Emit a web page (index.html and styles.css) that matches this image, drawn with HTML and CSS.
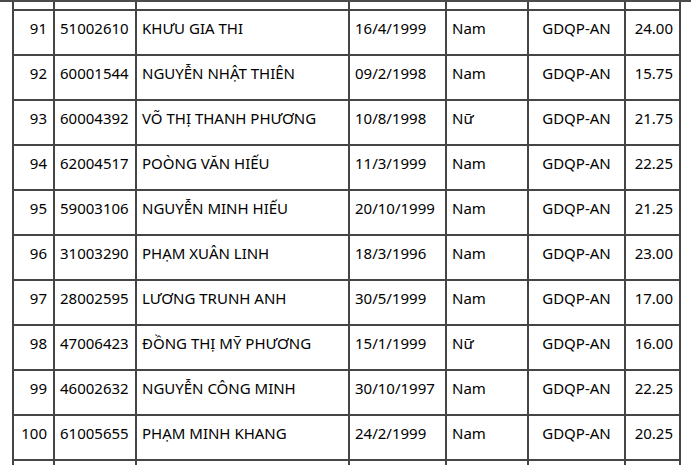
FILE: index.html
```html
<!DOCTYPE html>
<html lang="vi">
<head>
<meta charset="utf-8">
<title>Danh sách</title>
<link rel="stylesheet" href="styles.css">
</head>
<body>
<div class="topbar"></div>
<div class="sheet">
  <div class="row stub"><div class="c"></div><div class="c"></div><div class="c"></div><div class="c"></div><div class="c"></div><div class="c"></div><div class="c"></div></div>
  <div class="row"><div class="c num">91</div><div class="c">51002610</div><div class="c">KHƯU GIA THI</div><div class="c">16/4/1999</div><div class="c">Nam</div><div class="c mid">GDQP-AN</div><div class="c num">24.00</div></div>
  <div class="row"><div class="c num">92</div><div class="c">60001544</div><div class="c">NGUYỄN NHẬT THIÊN</div><div class="c">09/2/1998</div><div class="c">Nam</div><div class="c mid">GDQP-AN</div><div class="c num">15.75</div></div>
  <div class="row"><div class="c num">93</div><div class="c">60004392</div><div class="c">VÕ THỊ THANH PHƯƠNG</div><div class="c">10/8/1998</div><div class="c">Nữ</div><div class="c mid">GDQP-AN</div><div class="c num">21.75</div></div>
  <div class="row"><div class="c num">94</div><div class="c">62004517</div><div class="c">POÒNG VĂN HIẾU</div><div class="c">11/3/1999</div><div class="c">Nam</div><div class="c mid">GDQP-AN</div><div class="c num">22.25</div></div>
  <div class="row"><div class="c num">95</div><div class="c">59003106</div><div class="c">NGUYỄN MINH HIẾU</div><div class="c">20/10/1999</div><div class="c">Nam</div><div class="c mid">GDQP-AN</div><div class="c num">21.25</div></div>
  <div class="row"><div class="c num">96</div><div class="c">31003290</div><div class="c">PHẠM XUÂN LINH</div><div class="c">18/3/1996</div><div class="c">Nam</div><div class="c mid">GDQP-AN</div><div class="c num">23.00</div></div>
  <div class="row"><div class="c num">97</div><div class="c">28002595</div><div class="c">LƯƠNG TRUNH ANH</div><div class="c">30/5/1999</div><div class="c">Nam</div><div class="c mid">GDQP-AN</div><div class="c num">17.00</div></div>
  <div class="row"><div class="c num">98</div><div class="c">47006423</div><div class="c">ĐỒNG THỊ MỸ PHƯƠNG</div><div class="c">15/1/1999</div><div class="c">Nữ</div><div class="c mid">GDQP-AN</div><div class="c num">16.00</div></div>
  <div class="row"><div class="c num">99</div><div class="c">46002632</div><div class="c">NGUYỄN CÔNG MINH</div><div class="c">30/10/1997</div><div class="c">Nam</div><div class="c mid">GDQP-AN</div><div class="c num">22.25</div></div>
  <div class="row"><div class="c num">100</div><div class="c">61005655</div><div class="c">PHẠM MINH KHANG</div><div class="c">24/2/1999</div><div class="c">Nam</div><div class="c mid">GDQP-AN</div><div class="c num">20.25</div></div>
  <div class="row tail"><div class="c"></div><div class="c"></div><div class="c"></div><div class="c"></div><div class="c"></div><div class="c"></div><div class="c"></div></div>
</div>
</body>
</html>
```

FILE: styles.css
```css
html, body {
  margin: 0;
  padding: 0;
  background: #fff;
  overflow: hidden;
}

body {
  font-family: "Noto Sans", "DejaVu Sans", sans-serif;
  font-size: 15px;
  color: #000;
}

.topbar {
  height: 2px;
  background: #4b4b4b;
}

.sheet {
  margin-left: 12px;
  width: 669px;
}

.row {
  display: grid;
  grid-template-columns: 41px 82px 213px 97px 82px 97px 57px;
  height: 45px;
}

.row.stub {
  height: 7px;
}

.row.tail {
  height: 10px;
}

.c {
  box-sizing: border-box;
  border-left: 2px solid #454545;
  border-top: 2px solid #454545;
  padding: 7px 5px 0 5px;
  line-height: 20px;
  white-space: nowrap;
  overflow: hidden;
}

.c:last-child {
  border-right: 2px solid #454545;
}

.stub .c {
  border-top: 0;
}

.num {
  text-align: right;
  padding-right: 6px;
}

.mid {
  text-align: center;
}
```
